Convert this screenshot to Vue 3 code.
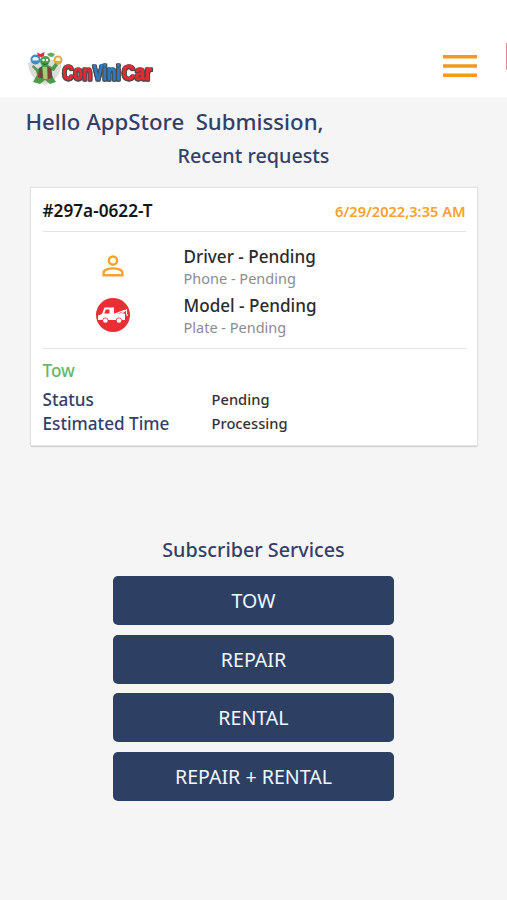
<script setup>
import { ref } from 'vue'

const request = ref({
  id: '#297a-0622-T',
  date: '6/29/2022,3:35 AM',
  type: 'Tow',
})

const details = ref([
  { label: 'Status', value: 'Pending' },
  { label: 'Estimated Time', value: 'Processing' },
])

const services = ['TOW', 'REPAIR', 'RENTAL', 'REPAIR + RENTAL']
</script>

<template>
  <div class="page">
    <header class="header">
      <svg class="logo" width="130" height="38" viewBox="0 0 130 38">
        <path d="M0 13 Q16 4 33 13 Q34 28 17 35 Q1 29 0 13Z" fill="#dcdcda" />
        <circle cx="7.5" cy="9.5" r="5" fill="#3e8bc9" />
        <path d="M4.5 10.5v-2l1.5-1.5h3l1.500 1.500v2z" fill="#e8f2fa" />
        <path d="M9 2.5l3.5 1.5 4-2-.5 4q-3 2-6 0z" fill="#d9303a" />
        <path d="M19 4l4-1.5 4 1.5-2 3-4-.5z" fill="#60aa5c" />
        <circle cx="30" cy="10" r="4.5" fill="#e8a53b" />
        <path d="M27.5 11v-2l1-1.5h3l1 1.5v2z" fill="#fdf2cf" />
        <path d="M5 15l5 4 4-3-2-4q0-6 5-6t5 5l-2 4 4 2 3-4 3 2-4 6-4-1 2 6 4 6-6 2-5-4-5 4-7-2 4-7-1-4-4-4z" fill="#4a9c49" />
        <path d="M11 18l3-1.5 1 12-5-1zM19.5 16.5l4 2.5 1 9-5 1z" fill="#823e37" />
        <path d="M14.5 17h4.5l.5 12h-4z" fill="#a9c979" />
        <circle cx="15.5" cy="10" r="1.2" fill="#fff" />
        <circle cx="19" cy="10" r="1.2" fill="#fff" />
        <path d="M14.5 13.5q2.5 2 5 0" fill="none" stroke="#245e2b" />
        <g class="logo-name">
          <text class="red" x="34.5" y="30" textLength="29.5" lengthAdjust="spacingAndGlyphs">Con</text>
          <text class="blue" x="65" y="30" textLength="27.5" lengthAdjust="spacingAndGlyphs">Vini</text>
          <text class="red" x="94" y="30" textLength="30" lengthAdjust="spacingAndGlyphs">Car</text>
        </g>
      </svg>
      <svg class="menu" width="34" height="24" viewBox="0 0 34 24">
        <path d="M0 2.7h34M0 12h34M0 21.3h34" stroke="#f39a1e" stroke-width="3.6" />
      </svg>
      <span class="edge"></span>
    </header>

    <main>
      <h1 class="hello">Hello AppStore&nbsp; Submission,</h1>
      <h2 class="recent">Recent requests</h2>

      <section class="card">
        <div class="card-head">
          <span class="req-id">{{ request.id }}</span>
          <span class="req-date">{{ request.date }}</span>
        </div>
        <div class="people">
          <div class="person">
            <div class="icon">
              <svg width="22" height="22" viewBox="0 0 22 22" fill="none" stroke="#f9a12b" stroke-width="2.4">
                <circle cx="11" cy="5.6" r="4.1" />
                <path d="M1.6 20.2v-2.6c0-2.8 5.8-4.2 9.4-4.2s9.4 1.4 9.4 4.2v2.6z" />
              </svg>
            </div>
            <div>
              <p class="name">Driver - Pending</p>
              <p class="sub phone">Phone - Pending</p>
            </div>
          </div>
          <div class="person">
            <div class="icon">
              <svg width="34" height="34" viewBox="0 0 34 34">
                <circle cx="17" cy="17" r="17" fill="#eb2d35" />
                <path d="M2 17.5l4-1.5 2.5-6.500h9.500v6h11v6.500h-3a3.200 3.200 0 0 0-6.200 0h-7.300a3.200 3.200 0 0 0-6.200 0H2z" fill="#fff" />
                <path d="M9.8 11.500h3.700v4H8.200z" fill="#eb2d35" />
                <path d="M19 16l11.5-4.500M24 16.500l6.500-5M30.500 11v4.500l1 2.500M25 13.500v3" fill="none" stroke="#fff" stroke-width="1.1" />
                <circle cx="9.4" cy="22.5" r="2.3" fill="#fff" />
                <circle cx="23" cy="22.5" r="2.3" fill="#fff" />
              </svg>
            </div>
            <div>
              <p class="name">Model - Pending</p>
              <p class="sub plate">Plate - Pending</p>
            </div>
          </div>
        </div>
        <p class="type">{{ request.type }}</p>
        <div v-for="item in details" :key="item.label" class="detail">
          <span class="label">{{ item.label }}</span>
          <span class="value">{{ item.value }}</span>
        </div>
      </section>

      <h2 class="services-title">Subscriber Services</h2>
      <div class="services">
        <button v-for="name in services" :key="name" class="service">{{ name }}</button>
      </div>
    </main>
  </div>
</template>

<style>
body {
  margin: 0;
  background: #f5f5f5;
}
</style>

<style scoped>
.page {
  height: 900px;
  overflow: hidden;
  background: #f5f5f5;
  font-family: "Noto Sans", "Open Sans", sans-serif;
  font-weight: 500;
  color: #343f69;
}
.header {
  position: relative;
  box-sizing: border-box;
  height: 97px;
  padding: 50px 30px 0 28px;
  display: flex;
  justify-content: space-between;
  align-items: flex-start;
  background: #fff;
}
.logo-name {
  font-family: "Liberation Sans", sans-serif;
  font-size: 22px;
  font-weight: bold;
  stroke-width: 0.8px;
  filter: drop-shadow(1px 0 0 #4a4a4c) drop-shadow(-1px 0 0 #4a4a4c) drop-shadow(0 1px 0 #4a4a4c);
}
.red {
  fill: #ea2932;
  stroke: #ea2932;
}
.blue {
  fill: #2b7cc4;
  stroke: #2b7cc4;
}
.menu {
  margin-top: 4px;
}
.edge {
  position: absolute;
  right: 0;
  top: 43px;
  width: 1px;
  height: 27px;
  background: #e28a92;
}
h1, h2, p {
  margin: 0;
  font-weight: 500;
}
.hello {
  padding: 10px 0 0 25.5px;
  font-size: 22.2px;
  line-height: 30px;
}
.recent {
  margin-top: 6px;
  font-size: 19.75px;
  line-height: 26px;
  text-align: center;
}
.card {
  box-sizing: border-box;
  width: 446px;
  height: 257px;
  margin: 19px 0 1px 31px;
  padding: 0 11.5px;
  background: #fff;
  box-shadow: 0 0 1px 1px #e2e2e2, 0 2px 1px #d2d2d2;
}
.card-head {
  box-sizing: border-box;
  height: 44px;
  padding-top: 2px;
  display: flex;
  justify-content: space-between;
  align-items: center;
  border-bottom: 1px solid #e2e2e2;
}
.req-id {
  font-size: 17.2px;
  font-weight: 600;
  color: #161616;
}
.req-date {
  font-size: 14.6px;
  font-weight: 600;
  color: #f9a12b;
}
.people {
  box-sizing: border-box;
  height: 117px;
  padding-top: 12px;
  border-bottom: 1px solid #e2e2e2;
}
.person {
  height: 49px;
  display: flex;
}
.icon {
  width: 141px;
  height: 43px;
  display: flex;
  align-items: center;
  justify-content: center;
}
.name {
  font-size: 17.1px;
  line-height: 26px;
  color: #2b2b2b;
}
.sub {
  font-size: 14.5px;
  font-weight: 400;
  line-height: 17px;
  color: #8c8c8c;
}
.type {
  padding-top: 10px;
  margin-bottom: 5px;
  font-size: 17.1px;
  line-height: 24px;
  color: #62b966;
}
.detail {
  display: flex;
  height: 23.5px;
  line-height: 24px;
}
.label {
  width: 169px;
  font-size: 17.15px;
}
.value {
  font-size: 14.7px;
  line-height: 23px;
  color: #333;
}
.services-title {
  margin-top: 92px;
  font-size: 19.75px;
  line-height: 26px;
  text-align: center;
}
.services {
  display: grid;
  gap: 9.6px;
  width: 281px;
  margin: 13px auto 0;
}
.service {
  height: 49px;
  padding: 0;
  border: 0;
  border-radius: 5px;
  background: #2d4063;
  color: #f2f7fd;
  font: 400 19.6px "Noto Sans", "Open Sans", sans-serif;
}
</style>
